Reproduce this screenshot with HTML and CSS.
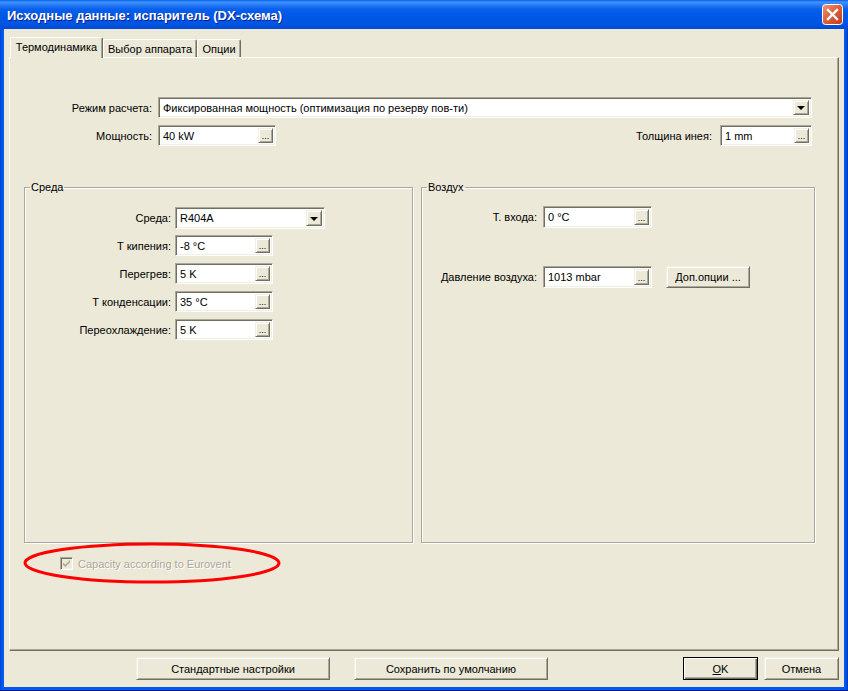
FILE: index.html
```html
<!DOCTYPE html>
<html lang="ru">

<head>
    <title>Исходные данные: испаритель (DX-схема)</title>
    <meta charset="utf-8">
    <link rel="stylesheet" href="styles.css">
</head>

<body>
    <div class="window">
        <div class="titlebar">
            <span class="title">Исходные данные: испаритель (DX-схема)</span>
            <span class="close">
                <svg width="21" height="21" viewBox="0 0 21 21">
                    <defs>
                        <linearGradient id="closebg" x1="0" y1="0" x2="1" y2="1">
                            <stop offset="0" stop-color="#F09A7C" />
                            <stop offset="0.45" stop-color="#E0623D" />
                            <stop offset="1" stop-color="#C23A17" />
                        </linearGradient>
                    </defs>
                    <rect x="0.5" y="0.5" width="20" height="20" rx="3" fill="url(#closebg)" stroke="#fff" />
                    <path d="M6 6 L15 15 M15 6 L6 15" stroke="#fff" stroke-width="2.4" stroke-linecap="square" />
                </svg>
            </span>
        </div>

        <div class="client">
            <div class="tabs">
                <div class="tab active" style="width: 93px">Термодинамика</div>
                <div class="tab" style="width: 94px">Выбор аппарата</div>
                <div class="tab" style="width: 44px">Опции</div>
            </div>

            <div class="pane">
                <div class="form-top">
                    <div class="frow">
                        <label class="lbl">Режим расчета:</label>
                        <div class="combo grow">
                            <span class="val">Фиксированная мощность (оптимизация по резерву пов-ти)</span>
                            <span class="drop"></span>
                        </div>
                    </div>
                    <div class="frow">
                        <label class="lbl">Мощность:</label>
                        <div class="field" style="width: 118px">
                            <span class="val">40 kW</span>
                            <span class="dots">...</span>
                        </div>
                        <span class="spacer"></span>
                        <label class="lbl-frost">Толщина инея:</label>
                        <div class="field" style="width: 92px">
                            <span class="val">1 mm</span>
                            <span class="dots">...</span>
                        </div>
                    </div>
                </div>

                <div class="groups">
                    <fieldset class="group medium">
                        <legend>Среда</legend>
                        <div class="grid">
                            <label>Среда:</label>
                            <div class="combo tall" style="width: 150px">
                                <span class="val">R404A</span>
                                <span class="drop"></span>
                            </div>
                            <label>Т кипения:</label>
                            <div class="field" style="width: 98px">
                                <span class="val">-8 °C</span>
                                <span class="dots">...</span>
                            </div>
                            <label>Перегрев:</label>
                            <div class="field" style="width: 98px">
                                <span class="val">5 K</span>
                                <span class="dots">...</span>
                            </div>
                            <label>Т конденсации:</label>
                            <div class="field" style="width: 98px">
                                <span class="val">35 °C</span>
                                <span class="dots">...</span>
                            </div>
                            <label>Переохлаждение:</label>
                            <div class="field" style="width: 98px">
                                <span class="val">5 K</span>
                                <span class="dots">...</span>
                            </div>
                        </div>
                    </fieldset>

                    <fieldset class="group air">
                        <legend>Воздух</legend>
                        <div class="grid">
                            <label>Т. входа:</label>
                            <div class="field tall" style="width: 109px">
                                <span class="val">0 °C</span>
                                <span class="dots">...</span>
                            </div>
                            <label>Давление воздуха:</label>
                            <div class="with-btn">
                                <div class="field tall" style="width: 109px">
                                    <span class="val">1013 mbar</span>
                                    <span class="dots">...</span>
                                </div>
                                <button class="btn small">Доп.опции ...</button>
                            </div>
                        </div>
                    </fieldset>
                </div>

                <div class="eurovent">
                    <span class="check">
                        <svg width="13" height="13" viewBox="0 0 13 13">
                            <path d="M3 5.5 L5.2 7.7 L10 3 L10 5.2 L5.2 10 L3 7.8 Z" fill="#ACA899" />
                        </svg>
                    </span>
                    <span class="check-text">Capacity according to Eurovent</span>
                    <svg class="mark" width="258" height="42" viewBox="0 0 258 42">
                        <ellipse cx="129" cy="21" rx="127" ry="19" fill="none" stroke="#ff0000" stroke-width="3" />
                    </svg>
                </div>
            </div>

            <div class="buttons">
                <button class="btn wide">Стандартные настройки</button>
                <button class="btn wide">Сохранить по умолчанию</button>
                <span class="spacer"></span>
                <button class="btn default"><u>O</u>K</button>
                <button class="btn">Отмена</button>
            </div>
        </div>
    </div>
</body>

</html>
```

FILE: styles.css
```css
* {
    box-sizing: border-box;
}

html,
body {
    margin: 0;
    padding: 0;
}

body {
    width: 848px;
    height: 691px;
    overflow: hidden;
    font-family: "Liberation Sans", Arial, sans-serif;
    font-size: 11px;
    color: black;
    background-color: #0055E5;
}

.window {
    width: 848px;
    height: 691px;
    display: flex;
    flex-direction: column;
    background: linear-gradient(to right, #0043C8 0, #0058EE 2px, #0058EE 846px, #0033A8 848px);
    border-bottom: 1px solid #001A8C;
}

/* title bar */

.titlebar {
    height: 29px;
    flex: none;
    display: flex;
    align-items: center;
    justify-content: space-between;
    padding: 0 5px 0 7px;
    background: linear-gradient(to bottom, #0A5EE8 0, #3D95FF 2px, #2A7CF6 5px, #0A60EC 9px, #0058E6 16px, #0055E3 24px, #0049D3 29px);
}

.title {
    color: white;
    font-weight: bold;
    font-size: 13px;
    text-shadow: 1px 1px #0A1E8A;
    padding-top: 1px;
}

.close {
    display: flex;
    width: 21px;
    height: 21px;
}

/* client area */

.client {
    flex: 1;
    margin: 0 4px 3px;
    padding: 8px 5px 0;
    background-color: #ECE9D8;
    display: flex;
    flex-direction: column;
}

.tabs {
    display: flex;
    align-items: flex-end;
    height: 20px;
    padding-left: 1px;
}

.tab {
    height: 18px;
    display: flex;
    align-items: center;
    justify-content: center;
    padding-top: 1px;
    background-color: #ECE9D8;
    border-top: 1px solid white;
    border-left: 1px solid white;
    border-right: 1px solid #716F64;
    border-radius: 2px 2px 0 0;
    box-shadow: inset -1px 0 #ACA899;
    white-space: nowrap;
}

.tab.active {
    height: 21px;
    margin-bottom: -1px;
    padding-top: 0;
    padding-bottom: 2px;
    position: relative;
    z-index: 1;
}

.pane {
    height: 594px;
    flex: none;
    padding: 39px 23px 0 14px;
    border-top: 1px solid white;
    border-left: 1px solid white;
    border-right: 1px solid #716F64;
    border-bottom: 1px solid #716F64;
    box-shadow: inset -1px -1px #ACA899;
}

/* top rows */

.form-top {
    display: flex;
    flex-direction: column;
    gap: 7px;
    margin-right: 3px;
}

.frow {
    display: flex;
    align-items: center;
    height: 21px;
}

.lbl {
    width: 128px;
    margin-right: 6px;
    text-align: right;
}

.lbl-frost {
    margin-right: 8px;
}

.spacer {
    flex: 1;
}

.grow {
    flex: 1;
}

/* sunken edit boxes */

.field,
.combo {
    height: 21px;
    display: flex;
    align-items: center;
    padding: 2px;
    background-color: white;
    border: 1px solid;
    border-color: #ACA899 white white #ACA899;
    box-shadow: inset 1px 1px #716F64, inset -1px -1px #F1EFE2;
}

.tall {
    height: 22px;
}

.val {
    flex: 1;
    padding-left: 2px;
    white-space: nowrap;
    overflow: hidden;
}

.dots,
.drop {
    width: 15px;
    height: 100%;
    flex: none;
    background-color: #ECE9D8;
    border: 1px solid;
    border-color: #F1EFE2 #716F64 #716F64 #F1EFE2;
    box-shadow: inset 1px 1px white, inset -1px -1px #ACA899;
}

.dots {
    display: flex;
    align-items: flex-end;
    justify-content: center;
    font-size: 9px;
    line-height: 9px;
    padding-bottom: 1px;
}

.drop {
    width: 16px;
    display: flex;
    align-items: center;
    justify-content: center;
}

.drop::after {
    content: "";
    border-left: 4px solid transparent;
    border-right: 4px solid transparent;
    border-top: 4px solid black;
    margin-top: 1px;
}

/* group boxes */

.groups {
    display: flex;
    gap: 8px;
    height: 362px;
    margin-top: 35px;
}

.group {
    margin: 0;
    padding: 0;
    border: 1px solid #ACA899;
    box-shadow: inset 1px 1px white, 1px 1px white;
}

.group legend {
    margin-left: 5px;
    padding: 0 1px;
    line-height: 13px;
}

.group.medium {
    width: 389px;
    padding-top: 13px;
}

.group.air {
    width: 394px;
    padding-top: 12px;
}

.grid {
    display: grid;
    align-items: center;
    justify-items: start;
}

.grid label {
    justify-self: end;
}

.medium .grid {
    grid-template-columns: 146px auto;
    grid-auto-rows: 21px;
    column-gap: 4px;
    row-gap: 7px;
    align-items: start;
}

.medium .grid label {
    align-self: center;
}

.air .grid {
    grid-template-columns: 115px auto;
    column-gap: 6px;
    row-gap: 38px;
}

.with-btn {
    display: flex;
    align-items: center;
    gap: 14px;
}

/* disabled check box */

.eurovent {
    position: relative;
    display: flex;
    align-items: center;
    height: 13px;
    margin-top: 14px;
    padding-left: 36px;
}

.check {
    width: 13px;
    height: 13px;
    display: flex;
    background-color: #ECE9D8;
    border: 1px solid;
    border-color: #ACA899 white white #ACA899;
    box-shadow: inset 1px 1px #716F64, inset -1px -1px #F1EFE2;
}

.check svg {
    margin: -1px;
}

.check-text {
    margin-left: 5px;
    color: #ACA899;
    text-shadow: 1px 1px white;
}

.mark {
    position: absolute;
    left: -1px;
    top: -15px;
}

/* push buttons */

.btn {
    height: 23px;
    width: 75px;
    padding: 0;
    font: inherit;
    color: black;
    background-color: #ECE9D8;
    border: 1px solid;
    border-color: #F1EFE2 #716F64 #716F64 #F1EFE2;
    box-shadow: inset 1px 1px white, inset -1px -1px #ACA899;
}

.btn.small {
    width: 84px;
    height: 22px;
}

.btn.wide {
    width: 194px;
}

.btn.default {
    border: 1px solid black;
    box-shadow: inset 1px 1px white, inset -1px -1px #716F64, inset -2px -2px #ACA899;
    margin-right: 6px;
}

.buttons {
    display: flex;
    align-items: center;
    margin-top: 6px;
    padding-left: 127px;
}

.buttons .wide + .wide {
    margin-left: 24px;
}
```
